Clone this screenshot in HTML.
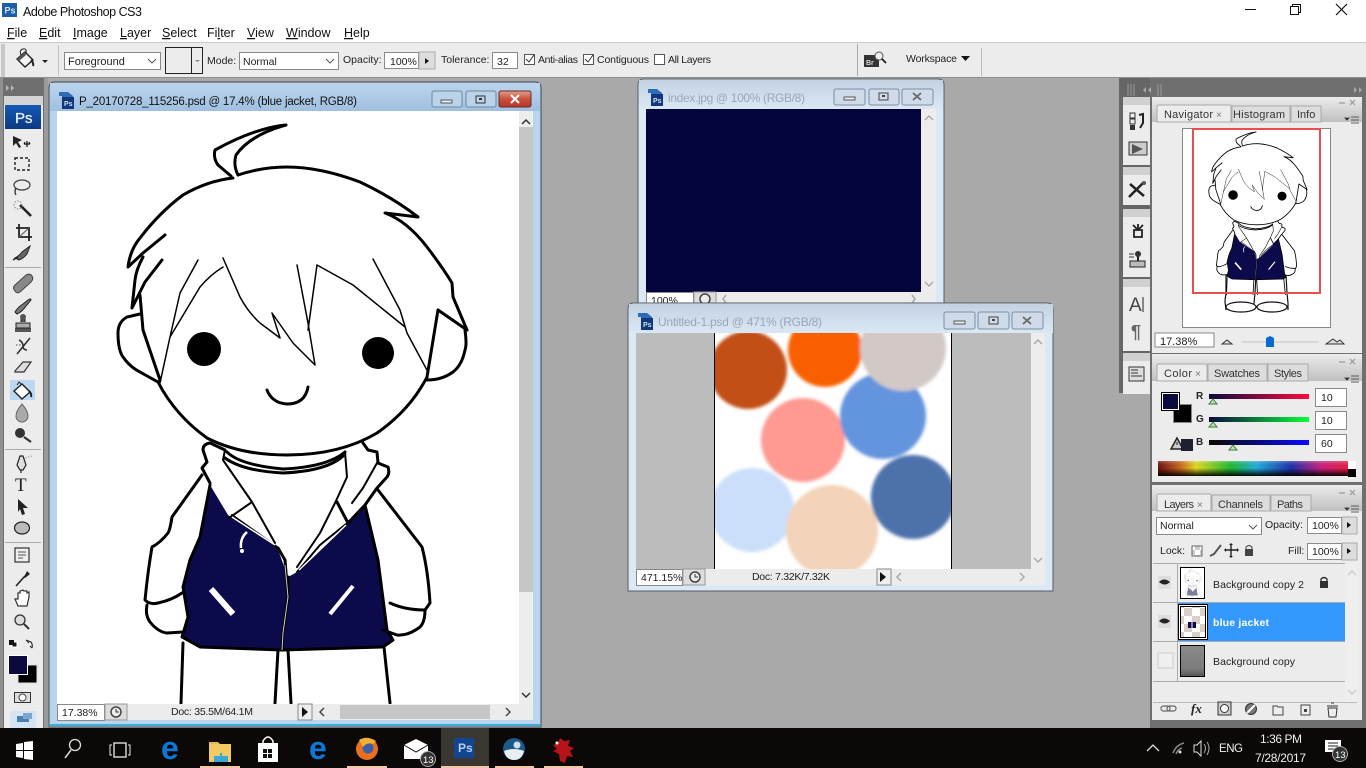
<!DOCTYPE html>
<html><head><meta charset="utf-8"><title>Adobe Photoshop CS3</title>
<style>
html,body{margin:0;padding:0;background:#a9a9a9;overflow:hidden;width:1366px;height:768px}
svg{display:block;position:absolute;left:0;top:0}
text{font-family:"Liberation Sans",sans-serif;font-size:11px;fill:#222}
.u{text-decoration:underline}
.m{font-size:12.5px;fill:#111}
.s{font-size:10.5px;fill:#222}
.t{font-size:11px;fill:#333}
.w{fill:#fff}
.g{fill:#9aa7b5;font-size:12px}
.b{fill:#fff;stroke:#8a8a8a;stroke-width:1}
.bk{fill:none;stroke:#000;stroke-width:3;stroke-linejoin:round;stroke-linecap:round}
.th{fill:none;stroke:#000;stroke-width:1.5;stroke-linejoin:round;stroke-linecap:round}
.ic{fill:none;stroke:#222;stroke-width:1.4;stroke-linejoin:round;stroke-linecap:round}
</style></head><body>
<svg width="1366" height="768" viewBox="0 0 1366 768" xmlns="http://www.w3.org/2000/svg">
<defs>
<linearGradient id="act" x1="0" y1="0" x2="0" y2="1"><stop offset="0" stop-color="#bcd5ee"/><stop offset="1" stop-color="#9fc0e0"/></linearGradient>
<linearGradient id="ina" x1="0" y1="0" x2="0" y2="1"><stop offset="0" stop-color="#c3d2e2"/><stop offset="1" stop-color="#dbe7f3"/></linearGradient>
<linearGradient id="cls" x1="0" y1="0" x2="0" y2="1"><stop offset="0" stop-color="#e2a08e"/><stop offset=".5" stop-color="#c9503a"/><stop offset="1" stop-color="#b9352a"/></linearGradient>
<linearGradient id="tab" x1="0" y1="0" x2="0" y2="1"><stop offset="0" stop-color="#ececec"/><stop offset="1" stop-color="#c0c0c0"/></linearGradient>
<linearGradient id="ps" x1="0" y1="0" x2="0" y2="1"><stop offset="0" stop-color="#1458b5"/><stop offset="1" stop-color="#0c3a80"/></linearGradient>
<linearGradient id="sp" x1="0" y1="0" x2="1" y2="0"><stop offset="0" stop-color="#701010"/><stop offset=".12" stop-color="#d06a20"/><stop offset=".2" stop-color="#e8e020"/><stop offset=".38" stop-color="#20c030"/><stop offset=".52" stop-color="#20b0e0"/><stop offset=".7" stop-color="#2030b0"/><stop offset=".86" stop-color="#d02080"/><stop offset="1" stop-color="#f02040"/></linearGradient>
<linearGradient id="spd" x1="0" y1="0" x2="0" y2="1"><stop offset="0" stop-color="#fff" stop-opacity=".25"/><stop offset=".45" stop-color="#000" stop-opacity="0"/><stop offset="1" stop-color="#000" stop-opacity=".95"/></linearGradient>
<linearGradient id="rs" x1="0" y1="0" x2="1" y2="0"><stop offset="0" stop-color="#0a0a3c"/><stop offset="1" stop-color="#ff0a3c"/></linearGradient>
<linearGradient id="gs" x1="0" y1="0" x2="1" y2="0"><stop offset="0" stop-color="#0a0a3c"/><stop offset="1" stop-color="#0aff3c"/></linearGradient>
<linearGradient id="bs" x1="0" y1="0" x2="1" y2="0"><stop offset="0" stop-color="#0a0a00"/><stop offset="1" stop-color="#0a0aff"/></linearGradient>
<linearGradient id="gth" x1="0" y1="0" x2="0" y2="1"><stop offset="0" stop-color="#8a8a8a"/><stop offset=".75" stop-color="#7c7c7c"/><stop offset="1" stop-color="#555"/></linearGradient>
<filter id="bl" x="-10%" y="-10%" width="120%" height="120%"><feGaussianBlur stdDeviation="1.6"/></filter>
<pattern id="chk" width="16" height="16" patternUnits="userSpaceOnUse"><rect width="16" height="16" fill="#fff"/><rect width="8" height="8" fill="#d9cfc6"/><rect x="8" y="8" width="8" height="8" fill="#d9cfc6"/></pattern>
<pattern id="chks" width="10" height="10" patternUnits="userSpaceOnUse"><rect width="10" height="10" fill="#fff"/><rect width="5" height="5" fill="#ccc"/><rect x="5" y="5" width="5" height="5" fill="#ccc"/></pattern>
<clipPath id="cv"><rect x="715" y="333" width="236" height="236"/></clipPath>
<clipPath id="c1"><rect x="57" y="111" width="462" height="593"/></clipPath>
<g id="docic"><path d="M0 0h9l5 4v13H3V4H0z" fill="#2d6cb5"/><rect x="3" y="5" width="12" height="12" fill="#10387a"/><text x="5" y="14" style="font-size:7px;font-weight:bold;fill:#cfe0f5">Ps</text></g>
<g id="ch">
<path fill="#0b0b4c" d="M210 485L228 515 277 547 288 577 297 572 347 523 365 505 378 560 387 630 393 640 383 647 282 650 200 647 182 637 188 617 183 587 190 560 200 537Z"/>
<path class="bk" d="M286 125Q255 128 215 150Q213 158 218 165L231 176M286 125Q250 135 236 155Q233 165 238 175"/>
<path class="bk" d="M238 175Q262 167 287 167Q320 167 360 182Q392 197 418 217L385 213Q407 221 427 247Q443 268 452 283L453 297L467 330"/>
<path class="bk" d="M233 178Q207 181 183 195Q160 212 140 238Q130 250 128 267L143 253L165 235"/>
<path class="bk" d="M143 257Q136 270 135 280L132 308L145 282L162 260"/>
<path class="bk" d="M140 295L143 330L160 380"/>
<path class="bk" d="M140 314L127 317Q118 322 118 333Q118 350 123 357Q130 367 140 372L158 382"/>
<path class="bk" d="M438 310L467 330M438 310L427 377"/>
<path class="bk" d="M465 330Q467 345 465 350Q462 365 453 372Q442 380 427 380"/>
<path class="bk" d="M427 377Q410 410 377 433Q340 455 287 455Q240 455 207 438Q175 415 158 382"/>
<path class="th" d="M198 260L180 293L170 337L160 383M223 267Q210 275 200 287L170 337"/>
<path class="th" d="M223 258L240 297Q248 312 260 323L280 338L272 313L293 343L315 365L308 323L297 265"/>
<path class="th" d="M308 330L317 265L353 285L405 327M373 259L400 310L407 333L428 372"/>
<circle cx="204" cy="349" r="17"/><circle cx="378" cy="353" r="16"/>
<path class="bk" stroke-width="2.5" d="M267 390Q272 403 287 404Q305 404 308 387"/>
<path class="bk" d="M225 450L210 443Q203 444 203 450L207 462L202 468L210 483"/>
<path class="th" style="stroke-width:2" d="M225 450L223 460L252 502L275 543M229 518L252 502M232 515L277 547"/>
<path class="bk" stroke-width="2" d="M227 452Q240 465 283 469Q327 467 345 452"/>
<path class="bk" stroke-width="2" d="M225 458Q243 471 283 473Q327 471 343 456"/>
<path class="bk" d="M202 475L172 517Q170 530 168 533Q160 543 152 547Q148 570 145 600Q150 605 158 603Q172 600 182 593"/>
<path class="bk" d="M147 605Q145 615 150 622Q158 632 167 633L183 632"/>
<path class="bk" d="M378 490L422 547Q428 570 430 603L425 610Q405 610 390 603"/>
<path class="bk" d="M425 610Q425 622 420 627Q408 636 397 635L383 630"/>
<path class="th" style="stroke-width:2" d="M345 452L347 477L335 503L320 533L297 567"/>
<path class="bk" stroke-width="2.4" d="M363 443L368 450L377 452L378 463L388 467Q390 473 387 477L377 488L365 505L348 523M337 502L348 523"/>
<path class="th" style="stroke-width:2" d="M352 503L363 488L377 463M297 572L320 545L346 524"/>
<path class="bk" d="M210 485L200 537L190 560L183 587L188 617L182 637L200 647L282 650L383 647L393 640L387 630L378 560L365 505"/>
<path class="bk" d="M278 548L285 560L288 597L283 633L282 650M288 577L288 597"/>
<path fill="none" stroke="#ccc" stroke-width="1" d="M285 565L288 597L283 633L282 650"/>
<path fill="none" stroke="#fff" stroke-width="6" d="M211 589L233 614"/>
<path fill="none" stroke="#fff" stroke-width="4" d="M353 586L330 614"/>
<path fill="none" stroke="#fff" stroke-width="2.5" d="M247 532Q240 538 241 548"/><circle cx="242" cy="551" r="2" fill="#fff"/>
<path fill="none" stroke="#fff" stroke-width="1.5" d="M232 517L275 545M299 570L346 525"/>
<path class="bk" d="M183 643L181 703M278 650L275 703M288 650L291 703M384 647L390 703"/>
</g>
</defs>

<!-- base -->
<rect width="1366" height="768" fill="#a9a9a9"/>
<rect width="1366" height="43" fill="#fff"/>
<rect y="42" width="1366" height="1" fill="#c8c8c8"/>
<rect y="43" width="1366" height="35" fill="#ececec"/>
<rect y="77" width="1366" height="1" fill="#8f8f8f"/>

<!-- title bar -->
<rect x="2" y="3" width="15" height="14" fill="#1c5ea8"/>
<text x="4.5" y="13.5" style="font-size:9px;font-weight:bold;fill:#d6e6f8">Ps</text>
<text x="23" y="16" class="m" textLength="119">Adobe Photoshop CS3</text>
<path d="M1245 9.5h11" stroke="#111" stroke-width="1"/>
<path d="M1290.5 6.5h8v8h-8zM1292.5 6.5v-2h8v8h-2" fill="none" stroke="#111"/>
<path d="M1336 4l11 11M1347 4l-11 11" stroke="#111" stroke-width="1.2"/>

<!-- menu -->
<text y="37" class="m"><tspan x="7" class="u">F</tspan><tspan>ile</tspan></text>
<text y="37" class="m"><tspan x="39" class="u">E</tspan><tspan>dit</tspan></text>
<text y="37" class="m"><tspan x="73" class="u">I</tspan><tspan>mage</tspan></text>
<text y="37" class="m"><tspan x="120" class="u">L</tspan><tspan>ayer</tspan></text>
<text y="37" class="m"><tspan x="162" class="u">S</tspan><tspan>elect</tspan></text>
<text y="37" class="m"><tspan x="207">Fi</tspan><tspan class="u">l</tspan><tspan>ter</tspan></text>
<text y="37" class="m"><tspan x="247" class="u">V</tspan><tspan>iew</tspan></text>
<text y="37" class="m"><tspan x="286" class="u">W</tspan><tspan>indow</tspan></text>
<text y="37" class="m"><tspan x="344" class="u">H</tspan><tspan>elp</tspan></text>

<!-- options bar -->
<rect x="1" y="44" width="4" height="33" fill="#c8c8c8"/>
<path d="M17 59l8-7 8 8-8 7z" fill="#f4f4f4" stroke="#222" stroke-width="1.400"/><path d="M17 59l8-7 1 3-7 6z" fill="#555"/><path d="M21 55q-2-5 2-6t3 4" fill="none" stroke="#222"/><path d="M31 60q3 3 2 6" stroke="#222" stroke-width="2" fill="none"/>
<path d="M42 60h6l-3 3z" fill="#222"/>
<rect x="58" y="45" width="1" height="31" fill="#c4c4c4"/>
<rect class="b" x="64.500" y="52.500" width="96" height="17"/><text x="68" y="65" class="s" style="font-size:11px">Foreground</text>
<path d="M148 59l4 4 4-4" fill="none" stroke="#555"/>
<rect x="165.500" y="47.500" width="37" height="26" fill="#ececec" stroke="#222"/><path d="M191.500 47v26" stroke="#222"/><path d="M195 60h5l-2.500 2z" fill="#888"/>
<text x="207" y="64" class="s">Mode:</text>
<rect class="b" x="239.500" y="52.500" width="99" height="17"/><text x="243" y="65" class="s">Normal</text>
<path d="M326 59l4 4 4-4" fill="none" stroke="#555"/>
<text x="343" y="63" class="s">Opacity:</text>
<rect class="b" x="384.500" y="52.500" width="34" height="16"/><text x="390" y="65" class="s">100%</text>
<rect x="419" y="52" width="16" height="17" fill="#ddd" stroke="#aaa"/><path d="M425 58l4 3-4 3z" fill="#111"/>
<text x="441" y="63" class="s">Tolerance:</text>
<rect class="b" x="492.500" y="52.500" width="25" height="16"/><text x="497" y="65" class="s">32</text>
<rect x="524.500" y="54.500" width="10" height="10" fill="#fff" stroke="#555"/><path d="M526 59l3 3 5-7" fill="none" stroke="#333"/>
<text x="538" y="63" class="s" textLength="40">Anti-alias</text>
<rect x="583.500" y="54.500" width="10" height="10" fill="#fff" stroke="#555"/><path d="M585 59l3 3 5-7" fill="none" stroke="#333"/>
<text x="597" y="63" class="s" textLength="52">Contiguous</text>
<rect x="654.500" y="54.500" width="10" height="10" fill="#fff" stroke="#555"/>
<text x="668" y="63" class="s" textLength="43">All Layers</text>
<rect x="857" y="44" width="1" height="32" fill="#aaa"/>
<rect x="864" y="55" width="15" height="12" fill="#333"/><text x="866" y="65" style="font-size:7px;font-weight:bold;fill:#ddd">Br</text>
<circle cx="879" cy="56" r="4" fill="#eee" stroke="#555"/><path d="M882 59l4 4" stroke="#111" stroke-width="1.6"/>
<text x="906" y="62" class="s" textLength="51">Workspace</text><path d="M961 56h9l-4.500 5z" fill="#111"/>
<rect x="981" y="48" width="1" height="28" fill="#bbb"/>

<!-- toolbox -->
<rect x="0" y="78" width="47" height="650" fill="#6f6f6f"/>
<rect x="44" y="78" width="4" height="650" fill="#9a9a9a"/>
<rect x="0" y="78" width="3" height="650" fill="#909090"/>
<path d="M6 85l3 3-3 3zM11 85l3 3-3 3z" fill="#bbb"/>
<rect x="4" y="96" width="39" height="632" fill="#ececec"/>
<rect x="4" y="96" width="39" height="9" fill="#d4d4d4"/>
<rect x="5" y="105" width="36" height="24" fill="url(#ps)"/>
<text x="15" y="123" style="font-size:15px;font-weight:normal;stroke:#e8f0fa;stroke-width:.3;fill:#e8f0fa">Ps</text>
<!-- tools -->
<path d="M13 136l9 4-4 2 3 5-2 1-3-5-3 3z" fill="#222"/><path d="M24 144h6M27 141v6" stroke="#111" stroke-width="1.2"/><path d="M30 144l-1-2M24 144l1-2" stroke="#111"/>
<rect x="15" y="158" width="14" height="12" fill="none" stroke="#222" stroke-dasharray="3 2" stroke-width="1.4"/>
<ellipse cx="22" cy="185" rx="8" ry="5" fill="none" stroke="#444" stroke-width="1.3"/><path d="M16 188q-2 4 0 7" fill="none" stroke="#333" stroke-width="1.4"/>
<path d="M20 205l11 11" stroke="#222" stroke-width="2.6"/><circle cx="18" cy="205" r="4" fill="none" stroke="#888" stroke-dasharray="1.500 1.500"/>
<path d="M19 224v13h13M16 228h13v13" fill="none" stroke="#222" stroke-width="1.8"/><path d="M19 237l10-9" stroke="#555"/>
<path d="M15 258q4-2 7-6l8-6-3 8q-3 4-8 6z" fill="#666" stroke="#222"/><path d="M13 260l5-3" stroke="#222" stroke-width="1.500"/>
<rect x="5" y="267" width="36" height="1" fill="#aaa"/>
<path d="M15 291q-3-3 0-6l11-10q4-2 6 1 2 3-1 6l-11 10q-3 2-5-1z" fill="#888" stroke="#444"/>
<path d="M15 312q3-5 8-8l5-4q3-2 3 0l-5 6q-4 6-9 8z" fill="#777" stroke="#222"/>
<rect x="15" y="328" width="16" height="4" fill="#555"/><rect x="16" y="323" width="14" height="5" fill="#aaa" stroke="#222"/><path d="M21 322v-3h4v3" fill="#555" stroke="#222"/><circle cx="23" cy="317" r="3" fill="#555"/>
<path d="M17 354l13-16M19 340q4 2 4 6t4 4" fill="none" stroke="#333" stroke-width="1.600"/><path d="M16 345h6" stroke="#555" stroke-dasharray="1.500 1.500"/>
<path d="M15 371l8-9h8l-7 10h-9z" fill="#ddd" stroke="#333" stroke-width="1.200"/>
<rect x="10" y="380" width="25" height="20" fill="#bcd8f0"/>
<path d="M14 391l8-7 8 8-8 7z" fill="#fff" stroke="#222" stroke-width="1.400"/><path d="M21 384l-2-2-2 3" fill="none" stroke="#222"/><path d="M29 391q3 3 2 6" stroke="#222" stroke-width="2" fill="none"/>
<path d="M22 404q6 7 6 12a6 6 0 0 1-12 0q0-5 6-12z" fill="#aaa" stroke="#666"/>
<circle cx="20" cy="433" r="5" fill="#333"/><path d="M24 437l7 5" stroke="#333" stroke-width="2.200"/>
<rect x="5" y="449" width="36" height="1" fill="#aaa"/>
<path d="M20 456l-3 9 3 5h3l3-5-3-9zM21 470v3" fill="#ddd" stroke="#222" stroke-width="1.200"/><path d="M25 458l7-2" stroke="#999" stroke-dasharray="1.500 1.500"/>
<text x="15" y="491" style="font-size:19px;font-family:'Liberation Serif',serif;fill:#222">T</text>
<path d="M18 499l10 9-5 0 2 6-3 1-2-6-2 3z" fill="#222"/>
<ellipse cx="22" cy="528" rx="7.500" ry="6" fill="#bbb" stroke="#222" stroke-width="1.200"/>
<rect x="5" y="542" width="36" height="1" fill="#aaa"/>
<rect x="15" y="548" width="14" height="14" fill="#eee" stroke="#333" stroke-width="1.200"/><path d="M18 552h8M18 555h8M18 558h5" stroke="#555"/>
<path d="M16 586l9-10" stroke="#222" stroke-width="1.600"/><path d="M24 577l3-6 3 3-5 4z" fill="#222"/>
<path d="M15 599l3 7h9l2-9v-5l-2 1v-2l-3 0-1-1-3 1v2l-2 0v6z" fill="#fff" stroke="#333" stroke-width="1.200"/>
<circle cx="20" cy="620" r="5" fill="#ddd" stroke="#333" stroke-width="1.300"/><path d="M24 624l5 5" stroke="#333" stroke-width="2"/>
<rect x="12" y="642" width="5" height="5" fill="#111" stroke="#fff"/><rect x="9" y="640" width="5" height="5" fill="#111"/>
<path d="M26 640l5 2q2 3 1 6M26 640l3 3M32 648l-2-2" fill="none" stroke="#333" stroke-width="1.200"/>
<rect x="18" y="665" width="19" height="18" fill="#000" stroke="#ddd"/>
<rect x="8.500" y="655.500" width="19" height="19" fill="#0a0a3c" stroke="#fff"/>
<rect x="14.500" y="692.500" width="16" height="10" fill="#ddd" stroke="#333"/><circle cx="22.500" cy="697.500" r="3.500" fill="#fff" stroke="#444"/>
<rect x="10" y="711" width="26" height="17" fill="#d4e4f2"/><rect x="17" y="716" width="12" height="6" fill="#4a7fb5"/><rect x="23" y="713" width="9" height="6" fill="#7aa6d0"/>

<!-- doc window 1 -->
<path d="M55 82h480q6 0 6 6v639H49V88q0-6 6-6z" fill="#b9d4ef" stroke="#3c4650" stroke-width="1"/>
<rect x="50" y="83" width="490" height="28" fill="url(#act)"/>
<rect x="49" y="724" width="492" height="2" fill="#3eaed6"/>
<use href="#docic" x="59" y="92"/>
<text x="79" y="105" style="font-size:11.500px;fill:#111" textLength="278">P_20170728_115256.psd @ 17.4% (blue jacket, RGB/8)</text>
<rect x="432" y="91" width="30" height="16" rx="2" fill="#bcd2e8" stroke="#6d88a5"/><rect x="441" y="100" width="11" height="3" fill="#e8eef5" stroke="#555"/>
<rect x="466" y="91" width="30" height="16" rx="2" fill="#bcd2e8" stroke="#6d88a5"/><rect x="476" y="96" width="9" height="7" fill="none" stroke="#333"/><rect x="479" y="98" width="3" height="2" fill="#333"/>
<rect x="499" y="91" width="32" height="16" rx="2" fill="url(#cls)" stroke="#6b2a22"/><path d="M511 95l8 8M519 95l-8 8" stroke="#fff" stroke-width="2"/>
<rect x="57" y="111" width="462" height="593" fill="#fff"/>
<g clip-path="url(#c1)"><use href="#ch"/></g>
<rect x="519" y="111" width="14" height="593" fill="#ededed"/>
<rect x="519" y="127" width="14" height="465" fill="#c6c6c6"/>
<path d="M522 124l4-4 4 4M522 693l4 4 4-4" fill="none" stroke="#333" stroke-width="1.500"/>
<rect x="57" y="704" width="476" height="16" fill="#ececec"/>
<rect x="57.500" y="704.500" width="47" height="16" fill="#fff" stroke="#888"/><text x="62" y="716" class="s">17.38%</text>
<rect x="105" y="704" width="22" height="16" fill="#ddd" stroke="#999"/><circle cx="116" cy="712" r="5" fill="#eee" stroke="#444" stroke-width="1.500"/><path d="M116 709v3h3" fill="none" stroke="#333"/>
<text x="171" y="715" class="s" textLength="82">Doc: 35.5M/64.1M</text>
<rect x="298" y="704" width="14" height="16" fill="#eee" stroke="#888"/><path d="M302 707l6 5-6 5z" fill="#111"/>
<path d="M324 708l-4 4 4 4M506 708l4 4-4 4" fill="none" stroke="#444" stroke-width="1.500"/>
<rect x="340" y="705" width="150" height="14" fill="#c6c6c6"/>

<!-- index.jpg window -->
<path d="M644 79h294q6 0 6 6v220H638V85q0-6 6-6z" fill="#dbe8f5" stroke="#555d66"/>
<rect x="639" y="80" width="304" height="29" fill="url(#ina)"/>
<use href="#docic" x="648" y="89"/>
<text x="668" y="102" class="g" textLength="137">index.jpg @ 100% (RGB/8)</text>
<rect x="834" y="89" width="31" height="16" rx="2" fill="#cfdbe8" stroke="#7e8fa3"/><rect x="844" y="97" width="11" height="3" fill="#e8eef5" stroke="#555"/>
<rect x="869" y="89" width="30" height="16" rx="2" fill="#cfdbe8" stroke="#7e8fa3"/><rect x="879" y="93" width="9" height="7" fill="none" stroke="#444"/><rect x="882" y="95" width="3" height="2" fill="#444"/>
<rect x="902" y="89" width="31" height="16" rx="2" fill="#cfdbe8" stroke="#7e8fa3"/><path d="M913 93l8 7M921 93l-8 7" stroke="#666" stroke-width="1.800"/>
<rect x="646" y="109" width="275" height="183" fill="#04043c"/>
<rect x="921" y="109" width="15" height="183" fill="#ededed"/>
<path d="M925 120l4-4 4 4M925 282l4 4 4-4" fill="none" stroke="#aaa" stroke-width="1.500"/>
<rect x="646" y="292" width="290" height="13" fill="#ececec"/>
<rect x="646.500" y="292.500" width="47" height="12" fill="#fff" stroke="#888"/><text x="651" y="304" class="s">100%</text>
<rect x="694" y="292" width="22" height="12" fill="#ddd" stroke="#999"/><circle cx="705" cy="299" r="5" fill="#eee" stroke="#444" stroke-width="1.500"/>
<path d="M726 295l-3 4 3 4M912 295l3 4-3 4" fill="none" stroke="#aaa" stroke-width="1.500"/>

<!-- Untitled window -->
<path d="M634 303h413q6 0 6 6v282H628V309q0-6 6-6z" fill="#dbe8f5" stroke="#555d66"/>
<rect x="629" y="304" width="424" height="29" fill="url(#ina)"/>
<use href="#docic" x="638" y="313"/>
<text x="658" y="326" class="g" textLength="164">Untitled-1.psd @ 471% (RGB/8)</text>
<rect x="944" y="312" width="31" height="17" rx="2" fill="#cfdbe8" stroke="#7e8fa3"/><rect x="954" y="321" width="11" height="3" fill="#e8eef5" stroke="#555"/>
<rect x="978" y="312" width="31" height="17" rx="2" fill="#cfdbe8" stroke="#7e8fa3"/><rect x="989" y="317" width="9" height="7" fill="none" stroke="#444"/><rect x="992" y="319" width="3" height="2" fill="#444"/>
<rect x="1012" y="312" width="31" height="17" rx="2" fill="#cfdbe8" stroke="#7e8fa3"/><path d="M1023 317l8 7M1031 317l-8 7" stroke="#666" stroke-width="1.800"/>
<rect x="636" y="333" width="395" height="236" fill="#bcbcbc"/>
<rect x="714" y="333" width="238" height="236" fill="#000"/>
<rect x="715" y="333" width="236" height="236" fill="#fff"/>
<g clip-path="url(#cv)"><g filter="url(#bl)">
<circle cx="752" cy="510" r="42" fill="#cbdffb"/>
<circle cx="832" cy="531" r="46" fill="#f3d3b9"/>
<circle cx="803" cy="440" r="42" fill="#fe9a92"/>
<circle cx="748" cy="370" r="39" fill="#c24f16"/>
<circle cx="825" cy="350" r="37" fill="#f95f00"/>
<circle cx="883" cy="416" r="43" fill="#6394de"/>
<circle cx="903" cy="348" r="43" fill="#d2c9c6"/>
<circle cx="913" cy="497" r="42" fill="#4e72ab"/>
</g></g>
<rect x="1031" y="333" width="14" height="236" fill="#ededed"/>
<path d="M1034 344l4-4 4 4M1034 558l4 4 4-4" fill="none" stroke="#aaa" stroke-width="1.500"/>
<rect x="636" y="569" width="409" height="16" fill="#ececec"/>
<rect x="636.500" y="569.500" width="46" height="16" fill="#fff" stroke="#888"/><text x="641" y="581" class="s">471.15%</text>
<rect x="683" y="569" width="22" height="16" fill="#ddd" stroke="#999"/><circle cx="695" cy="577" r="5" fill="#eee" stroke="#444" stroke-width="1.500"/><path d="M695 574v3h3" fill="none" stroke="#333"/>
<text x="752" y="580" class="s" textLength="78">Doc: 7.32K/7.32K</text>
<rect x="877" y="569" width="14" height="16" fill="#eee" stroke="#888"/><path d="M880 572l6 5-6 5z" fill="#111"/>
<path d="M901 573l-4 4 4 4M1020 573l4 4-4 4" fill="none" stroke="#aaa" stroke-width="1.500"/>

<!-- right dock -->
<rect x="1119" y="78" width="247" height="650" fill="#6f6f6f"/>
<rect x="1119" y="78" width="31" height="321" fill="#666"/>
<rect x="1150" y="720" width="216" height="8" fill="#707070"/>
<rect x="1119" y="393" width="31" height="335" fill="#a9a9a9"/>
<path d="M1128 84v12M1131 84v12M1134 84v12M1158 84v12M1161 84v12" stroke="#999"/>
<path d="M1146 87l-3 3 3 3M1151 87l-3 3 3 3M1354 87l3 3-3 3M1359 87l3 3-3 3" fill="#aaa"/>
<!-- icon strip -->
<rect x="1123" y="97" width="27" height="68" fill="#ececec"/><rect x="1123" y="97" width="27" height="8" fill="#d0d0d0"/>
<rect x="1123" y="167" width="27" height="38" fill="#ececec"/><rect x="1123" y="167" width="27" height="8" fill="#d0d0d0"/>
<rect x="1123" y="209" width="27" height="68" fill="#ececec"/><rect x="1123" y="209" width="27" height="8" fill="#d0d0d0"/>
<rect x="1123" y="279" width="27" height="72" fill="#ececec"/><rect x="1123" y="279" width="27" height="8" fill="#d0d0d0"/>
<rect x="1123" y="353" width="27" height="41" fill="#ececec"/><rect x="1123" y="353" width="27" height="8" fill="#d0d0d0"/>
<rect x="1130" y="113" width="5" height="5" fill="none" stroke="#333"/><rect x="1130" y="119" width="5" height="5" fill="none" stroke="#333"/><rect x="1130" y="125" width="5" height="5" fill="#333"/>
<path d="M1139 115l4-1v9l-3 5" fill="none" stroke="#222" stroke-width="2"/>
<rect x="1129" y="142" width="18" height="13" fill="#ccc" stroke="#333"/><path d="M1132 144l11 5-11 5z" fill="#555"/>
<path d="M1129 197l14-14M1130 184l14 12" stroke="#222" stroke-width="2.500"/><circle cx="1144" cy="183" r="2" fill="#555"/>
<path d="M1134 230h8v7h-8zM1133 225l5 5M1143 225l-5 5M1138 224v6" fill="none" stroke="#222" stroke-width="1.800"/>
<rect x="1130" y="261" width="15" height="6" fill="#bbb" stroke="#222"/><path d="M1138 253v8" stroke="#222" stroke-width="2"/><circle cx="1138" cy="254" r="3" fill="#333"/><path d="M1129 254h5M1129 257h5" stroke="#333"/>
<text x="1129" y="311" style="font-size:19px;fill:#444">A</text><path d="M1143 297v15" stroke="#222"/>
<text x="1131" y="338" style="font-size:18px;font-weight:bold;fill:#666">¶</text>
<rect x="1129" y="367" width="15" height="14" fill="#ddd" stroke="#333"/><path d="M1131 370h7M1131 373h7M1131 376h11" stroke="#333"/>

<!-- navigator panel -->
<rect x="1152" y="97" width="210" height="256" fill="#ececec"/>
<rect x="1152" y="97" width="210" height="25" fill="url(#tab)"/>
<path d="M1157 122v-16q0-1 2-1h70q2 0 2 1v16z" fill="#ececec" stroke="#aaa"/>
<rect x="1232" y="106" width="58" height="16" fill="#ddd" stroke="#aaa"/>
<rect x="1291" y="106" width="30" height="16" fill="#ddd" stroke="#aaa"/>
<text x="1164" y="118" class="t" textLength="49">Navigator</text><text x="1216" y="118" style="font-size:10px;fill:#777">×</text>
<text x="1233" y="118" class="t" textLength="52">Histogram</text><text x="1297" y="118" class="t">Info</text>
<path d="M1339 103h6M1350 100l5 5M1355 100l-5 5" stroke="#999" stroke-width="1.200"/>
<path d="M1345 118h4l-2 2zM1351 117h8M1351 120h8M1351 123h8" fill="#333" stroke="#333" stroke-width=".8"/>
<rect x="1182.500" y="128.500" width="148" height="199" fill="#fff" stroke="#888"/>
<g transform="translate(1175.600 96.700) scale(.2816)"><use href="#ch"/></g>
<path d="M1226 275v19q-1 5 -1 8l1 8M1256 275l-1 18-1 10 0 7M1286 275l1 18 1 10v7" fill="none" stroke="#111" stroke-width="1.200"/>
<ellipse cx="1241" cy="307" rx="15" ry="5" fill="#fff" stroke="#111" stroke-width="1.200"/><ellipse cx="1272" cy="307" rx="15" ry="5" fill="#fff" stroke="#111" stroke-width="1.200"/>
<rect x="1193" y="129" width="127" height="164" fill="none" stroke="#e94f4f" stroke-width="2"/>
<rect x="1155" y="333" width="59" height="14" fill="#fff" stroke="#888"/><text x="1160" y="345" class="s" style="font-size:11px">17.38%</text>
<path d="M1222 344l5-4 5 4z" fill="#ddd" stroke="#333"/><path d="M1326 344l7-5 4 3 3-2 4 4z" fill="#ddd" stroke="#333"/>
<rect x="1242" y="341" width="77" height="2" fill="#d8d8d8"/>
<path d="M1266 338l4-2 4 2v9h-8z" fill="#0a6ad0"/>

<!-- color panel -->
<rect x="1152" y="354" width="210" height="128" fill="#ececec"/>
<rect x="1152" y="354" width="210" height="27" fill="url(#tab)"/>
<path d="M1157 381v-16q0-1 2-1h46q2 0 2 1v16z" fill="#ececec" stroke="#aaa"/>
<rect x="1208" y="364" width="59" height="17" fill="#ddd" stroke="#aaa"/>
<rect x="1268" y="364" width="40" height="17" fill="#ddd" stroke="#aaa"/>
<text x="1164" y="377" class="t" textLength="28">Color</text><text x="1195" y="377" style="font-size:10px;fill:#777">×</text>
<text x="1214" y="377" class="t" textLength="46">Swatches</text><text x="1274" y="377" class="t" textLength="28">Styles</text>
<path d="M1339 362h6M1350 359l5 5M1355 359l-5 5" stroke="#999" stroke-width="1.200"/>
<path d="M1345 378h4l-2 2zM1351 376h8M1351 379h8M1351 382h8" fill="#333" stroke="#333" stroke-width=".8"/>
<rect x="1173.500" y="404.500" width="18" height="18" fill="#000" stroke="#888"/>
<rect x="1161.500" y="392.500" width="18" height="18" fill="#0a0a3c" stroke="#000"/><rect x="1162.500" y="393.500" width="16" height="16" fill="#0a0a3c" stroke="#fff"/>
<path d="M1171 449l6-11 6 11z" fill="#ccc" stroke="#222" stroke-width="1.500"/><path d="M1177 442v3" stroke="#222"/>
<rect x="1181" y="439" width="12" height="12" fill="#1d2030"/>
<text x="1196" y="399" style="font-weight:bold;font-size:10px">R</text><text x="1196" y="422" style="font-weight:bold;font-size:10px">G</text><text x="1196" y="445" style="font-weight:bold;font-size:10px">B</text>
<rect x="1209" y="394" width="100" height="5" fill="url(#rs)"/><rect x="1209" y="417" width="100" height="5" fill="url(#gs)"/><rect x="1209" y="440" width="100" height="5" fill="url(#bs)"/>
<path d="M1213 399l4 5h-8z" fill="#bde0b0" stroke="#3a7a3a"/><path d="M1213 422l4 5h-8z" fill="#bde0b0" stroke="#3a7a3a"/><path d="M1233 445l4 5h-8z" fill="#bde0b0" stroke="#3a7a3a"/>
<rect class="b" x="1315.500" y="388.500" width="31" height="18"/><text x="1321" y="401" class="s">10</text>
<rect class="b" x="1315.500" y="411.500" width="31" height="18"/><text x="1321" y="424" class="s">10</text>
<rect class="b" x="1315.500" y="434.500" width="31" height="18"/><text x="1321" y="447" class="s">60</text>
<rect x="1158" y="461" width="190" height="15" fill="url(#sp)"/><rect x="1158" y="461" width="190" height="15" fill="url(#spd)"/>
<rect x="1348" y="461" width="8" height="8" fill="#fff"/><rect x="1348" y="469" width="8" height="8" fill="#000"/>

<!-- layers panel -->
<rect x="1152" y="485" width="210" height="235" fill="#ececec"/>
<rect x="1152" y="485" width="210" height="26" fill="url(#tab)"/>
<path d="M1157 511v-16q0-1 2-1h50q2 0 2 1v16z" fill="#ececec" stroke="#aaa"/>
<rect x="1212" y="495" width="58" height="16" fill="#ddd" stroke="#aaa"/>
<rect x="1271" y="495" width="40" height="16" fill="#ddd" stroke="#aaa"/>
<text x="1164" y="508" class="t" textLength="30">Layers</text><text x="1197" y="508" style="font-size:10px;fill:#777">×</text>
<text x="1218" y="508" class="t" textLength="45">Channels</text><text x="1277" y="508" class="t" textLength="26">Paths</text>
<path d="M1339 493h6M1350 490l5 5M1355 490l-5 5" stroke="#999" stroke-width="1.200"/>
<path d="M1345 508h4l-2 2zM1351 506h8M1351 509h8M1351 512h8" fill="#333" stroke="#333" stroke-width=".8"/>
<rect class="b" x="1156.500" y="517.500" width="105" height="17"/><text x="1160" y="529" class="s">Normal</text>
<path d="M1249 525l4 4 4-4" fill="none" stroke="#555"/>
<text x="1265" y="528" class="s" textLength="38">Opacity:</text>
<rect class="b" x="1307.500" y="517.500" width="34" height="16"/><text x="1312" y="529" class="s">100%</text>
<rect x="1342" y="517" width="15" height="17" fill="#ddd" stroke="#aaa"/><path d="M1347 522l4 3-4 3z" fill="#111"/>
<text x="1160" y="554" class="s">Lock:</text>
<rect x="1192" y="546" width="10" height="10" fill="url(#chks)" stroke="#666"/>
<path d="M1210 556l4-2 7-9" fill="none" stroke="#555" stroke-width="2"/>
<path d="M1231 544v13M1225 550h13" stroke="#222" stroke-width="1.400"/><path d="M1231 543l-2 2h4zM1231 558l-2-2h4zM1224 550l2-2v4zM1239 550l-2-2v4z" fill="#222"/>
<rect x="1245" y="549" width="8" height="7" fill="#444"/><path d="M1246 549v-2q3-3 6 0v2" fill="none" stroke="#444"/>
<text x="1288" y="554" class="s">Fill:</text>
<rect class="b" x="1307.500" y="543.500" width="34" height="16"/><text x="1312" y="555" class="s">100%</text>
<rect x="1342" y="543" width="15" height="17" fill="#ddd" stroke="#aaa"/><path d="M1347 548l4 3-4 3z" fill="#111"/>
<rect x="1153" y="563" width="192" height="1" fill="#aaa"/>
<rect x="1177" y="564" width="1" height="117" fill="#aaa"/>
<rect x="1153" y="602" width="192" height="1" fill="#aaa"/>
<rect x="1153" y="641" width="192" height="1" fill="#aaa"/>
<rect x="1153" y="681" width="192" height="1" fill="#aaa"/>
<rect x="1178" y="603" width="167" height="38" fill="#3399ff"/>
<rect x="1345" y="564" width="12" height="138" fill="#efefef"/>
<path d="M1348 575l4-4 4 4M1348 690l4 4 4-4" fill="none" stroke="#ccc" stroke-width="1.500"/>
<!-- eyes -->
<rect x="1158" y="576" width="13" height="13" fill="#ddd"/><path d="M1159 582q5-5 11 0q-5 5-11 0z" fill="#222"/>
<rect x="1158" y="615" width="13" height="13" fill="#ddd"/><path d="M1159 621q5-5 11 0q-5 5-11 0z" fill="#222"/>
<rect x="1158" y="653" width="15" height="15" fill="#efefef" stroke="#ccc"/>
<rect x="1180.500" y="567.500" width="24" height="31" fill="#fff" stroke="#000"/>
<g transform="translate(1178 563) scale(.05)" opacity=".55"><use href="#ch"/></g>
<rect x="1178.500" y="604.500" width="29" height="35" fill="#fff" stroke="#000"/>
<rect x="1180.500" y="606.500" width="25" height="31" fill="url(#chk)" stroke="#000"/>
<rect x="1188" y="622" width="8" height="6" fill="#0b0b4c"/><rect x="1191.500" y="622" width="1" height="6" fill="#fff"/>
<rect x="1180.500" y="645.500" width="24" height="31" fill="url(#gth)" stroke="#000"/>
<text x="1213" y="588" class="s" style="font-size:10.500px" textLength="91">Background copy 2</text>
<text x="1213" y="626" class="s w" style="font-weight:bold;fill:#fff" textLength="56">blue jacket</text>
<text x="1213" y="665" class="s" textLength="82">Background copy</text>
<rect x="1320" y="581" width="8" height="7" fill="#333"/><path d="M1321 581v-2q3-3 6 0v2" fill="none" stroke="#333" stroke-width="1.300"/>
<!-- layer footer -->
<rect x="1153" y="702" width="204" height="1" fill="#bbb"/>
<rect x="1161" y="706" width="9" height="5" rx="2.500" fill="none" stroke="#666" stroke-width="1.200"/><rect x="1167" y="706" width="9" height="5" rx="2.500" fill="none" stroke="#666" stroke-width="1.200"/>
<text x="1191" y="713" style="font-family:'Liberation Serif',serif;font-style:italic;font-weight:bold;font-size:13px">fx</text>
<rect x="1218" y="702" width="13" height="13" fill="#ccc" stroke="#333"/><circle cx="1224.500" cy="708.500" r="4" fill="#fff" stroke="#333"/>
<circle cx="1251" cy="709" r="5.500" fill="#777" stroke="#333"/><path d="M1247 713l8-8" stroke="#fff" stroke-width="2"/>
<path d="M1273 706h4l1 1h5v8h-10z" fill="#eee" stroke="#444"/>
<rect x="1301" y="705" width="9" height="10" fill="#eee" stroke="#444"/><rect x="1304" y="709" width="3" height="3" fill="#444"/>
<path d="M1328 708h9l-1 9h-7zM1327 706h11M1331 703h3" fill="#eee" stroke="#333"/>

<!-- taskbar -->
<rect y="728" width="1366" height="40" fill="#0b0807"/>
<rect x="441" y="728" width="48" height="40" fill="#3a3632"/>
<rect x="200" y="766" width="40" height="2" fill="#f3c6a8"/><rect x="347" y="766" width="40" height="2" fill="#f3c6a8"/><rect x="441" y="766" width="48" height="2" fill="#f3c6a8"/><rect x="495" y="766" width="39" height="2" fill="#f3c6a8"/><rect x="544" y="766" width="39" height="2" fill="#f3c6a8"/>
<path d="M16 744l7-1v7h-7zM24 742l9-1v9h-9zM16 751h7v7l-7-1zM24 751h9v9l-9-1z" fill="#fff"/>
<circle cx="75" cy="745" r="5.500" fill="none" stroke="#ddd" stroke-width="1.300"/><path d="M71 750l-6 8" stroke="#ddd" stroke-width="1.500"/>
<rect x="114" y="743" width="12" height="14" fill="none" stroke="#eee" stroke-width="1.300"/><path d="M112 745h-2v10h2M128 745h2v10h-2" fill="none" stroke="#eee"/>
<text x="161" y="759" style="font-size:32px;font-weight:bold;fill:#0a78d7">e</text>
<path d="M209 744h22v18h-22z" fill="#f3c964"/><path d="M209 742h9l2 2h-11z" fill="#e8b84c"/><path d="M214 762v-6h6v-3h2v3h6v6z" fill="#3aa7d9"/>
<path d="M258 743h20v19h-20z" fill="#fff"/><path d="M263 743v-2q5-8 10 0v2" fill="none" stroke="#fff" stroke-width="1.500"/><path d="M263 749h4v4h-4zM268 749h4v4h-4zM263 754h4v4h-4zM268 754h4v4h-4z" fill="#111"/>
<text x="309" y="759" style="font-size:32px;font-weight:bold;fill:#0a78d7">e</text>
<circle cx="367" cy="749" r="11" fill="#e8701e"/><circle cx="368" cy="748" r="5.500" fill="#3a5fa5"/><path d="M359 740q8-5 17 1l-3 3q-6-2-10 3z" fill="#f4b030"/>
<path d="M404 745l12-6 12 6v14h-24z" fill="#fff"/><path d="M404 745l12 7 12-7" fill="none" stroke="#111"/>
<circle cx="428" cy="759" r="7.500" fill="#333" stroke="#aaa"/><text x="423" y="763" style="font-size:9.500px;fill:#fff">13</text>
<rect x="454" y="738" width="20" height="20" fill="#12458f"/><text x="458" y="752" style="font-size:12px;font-weight:bold;fill:#b5d0f0">Ps</text>
<circle cx="514" cy="749" r="11" fill="#1a5a8a"/><path d="M504 751q10-4 20 0q-2 9-10 9q-8 0-10-9z" fill="#e8eef2"/><circle cx="517" cy="745" r="3.500" fill="#cfe0ea"/>
<path d="M553 745l5-2 2-5 4 3 6-1-2 6 6 2-4 3 3 6-6-1-2 7-5-2-1-7-6-3 4-2z" fill="#b81318"/><circle cx="557" cy="743" r="1.500" fill="#fff"/>
<!-- tray -->
<path d="M1147 751l6-6 6 6" fill="none" stroke="#ddd" stroke-width="1.300"/>
<path d="M1173 753q3-8 11-10M1176 754q2-5 6-6" fill="none" stroke="#888" stroke-width="1.500"/><circle cx="1180" cy="752" r="1.500" fill="#ddd"/>
<path d="M1194 745h3l4-4v15l-4-4h-3z" fill="none" stroke="#ddd"/><path d="M1204 744q3 4 0 9M1207 742q4 6 0 13" fill="none" stroke="#aaa"/>
<text x="1219" y="752" style="font-size:11.500px;fill:#eee" textLength="24">ENG</text>
<text x="1260" y="743" style="font-size:12px;fill:#eee" textLength="42">1:36 PM</text>
<text x="1255" y="762" style="font-size:12px;fill:#eee" textLength="51">7/28/2017</text>
<path d="M1325 740h16v12h-16z" fill="#fff"/><path d="M1328 743h10M1328 746h10M1328 749h8" stroke="#222"/>
<circle cx="1340" cy="754" r="7.500" fill="#333" stroke="#aaa"/><text x="1335" y="758" style="font-size:9.500px;fill:#fff">13</text>
</svg>
</body></html>
